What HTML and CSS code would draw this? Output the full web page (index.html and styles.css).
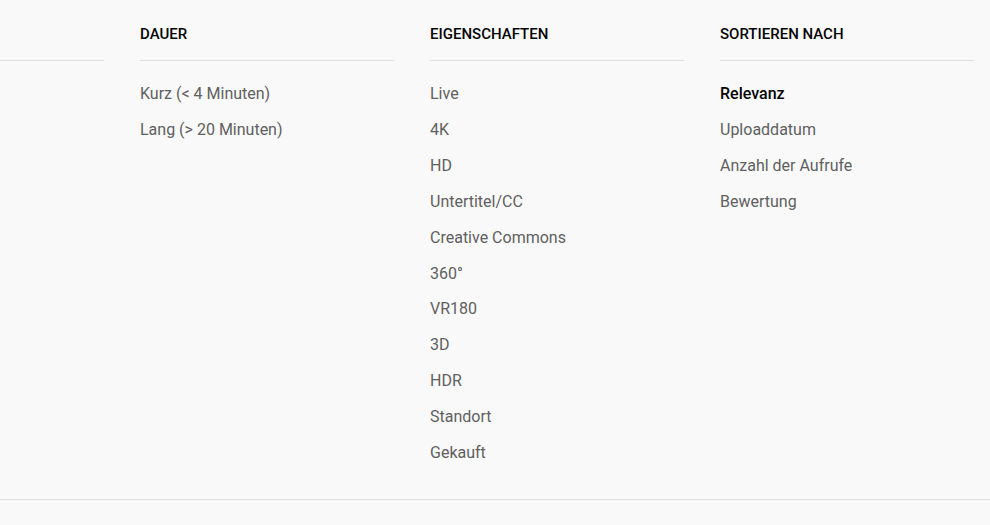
FILE: index.html
```html
<!DOCTYPE html>
<html lang="de">
<head>
<meta charset="utf-8">
<title>Suchfilter</title>
<link rel="stylesheet" href="styles.css">
</head>
<body>
<div class="panel">
  <div class="filters">
    <div class="group">
      <h4 class="group-title"></h4>
      <ul class="items"></ul>
    </div>
    <div class="group">
      <h4 class="group-title">Dauer</h4>
      <ul class="items">
        <li class="item">Kurz (&lt; 4 Minuten)</li>
        <li class="item">Lang (&gt; 20 Minuten)</li>
      </ul>
    </div>
    <div class="group">
      <h4 class="group-title">Eigenschaften</h4>
      <ul class="items">
        <li class="item">Live</li>
        <li class="item">4K</li>
        <li class="item">HD</li>
        <li class="item">Untertitel/CC</li>
        <li class="item">Creative Commons</li>
        <li class="item">360°</li>
        <li class="item">VR180</li>
        <li class="item">3D</li>
        <li class="item">HDR</li>
        <li class="item">Standort</li>
        <li class="item">Gekauft</li>
      </ul>
    </div>
    <div class="group">
      <h4 class="group-title">Sortieren nach</h4>
      <ul class="items">
        <li class="item selected">Relevanz</li>
        <li class="item">Uploaddatum</li>
        <li class="item">Anzahl der Aufrufe</li>
        <li class="item">Bewertung</li>
      </ul>
    </div>
  </div>
  <div class="bottom-divider"></div>
</div>
</body>
</html>
```
FILE: styles.css
```css
html, body {
  margin: 0;
  padding: 0;
  background: #f9f9f9;
  font-family: Roboto, "Liberation Sans", Arial, sans-serif;
  overflow: hidden;
}
.panel {
  width: 990px;
  height: 525px;
}
.filters {
  display: flex;
  gap: 36px;
  margin-left: -150px;
  padding-top: 24px;
  padding-bottom: 28px;
}
.group {
  flex: none;
  width: 254px;
}
.group-title {
  margin: 0;
  font-size: 15px;
  line-height: 20px;
  height: 20px;
  font-weight: 500;
  text-transform: uppercase;
  color: #030303;
  padding-bottom: 16px;
  border-bottom: 1px solid #e0e0e0;
}
.items {
  list-style: none;
  margin: 15px 0 0;
  padding: 0;
}
.item {
  font-size: 16px;
  line-height: 35.9px;
  color: #606060;
}
.item.selected {
  color: #030303;
  font-weight: 500;
}
.bottom-divider {
  height: 1px;
  background: #e0e0e0;
}
```
